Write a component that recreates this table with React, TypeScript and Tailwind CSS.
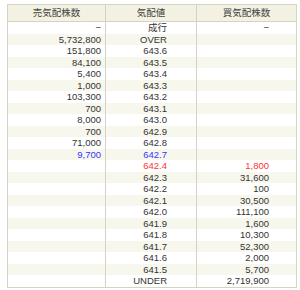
import React from 'react';

type Row = { sell: string; price: string; buy: string; tone?: 'blue' | 'red' };

const rows: Row[] = [
  { sell: '−', price: '成行', buy: '−' },
  { sell: '5,732,800', price: 'OVER', buy: '' },
  { sell: '151,800', price: '643.6', buy: '' },
  { sell: '84,100', price: '643.5', buy: '' },
  { sell: '5,400', price: '643.4', buy: '' },
  { sell: '1,000', price: '643.3', buy: '' },
  { sell: '103,300', price: '643.2', buy: '' },
  { sell: '700', price: '643.1', buy: '' },
  { sell: '8,000', price: '643.0', buy: '' },
  { sell: '700', price: '642.9', buy: '' },
  { sell: '71,000', price: '642.8', buy: '' },
  { sell: '9,700', price: '642.7', buy: '', tone: 'blue' },
  { sell: '', price: '642.4', buy: '1,800', tone: 'red' },
  { sell: '', price: '642.3', buy: '31,600' },
  { sell: '', price: '642.2', buy: '100' },
  { sell: '', price: '642.1', buy: '30,500' },
  { sell: '', price: '642.0', buy: '111,100' },
  { sell: '', price: '641.9', buy: '1,600' },
  { sell: '', price: '641.8', buy: '10,300' },
  { sell: '', price: '641.7', buy: '52,300' },
  { sell: '', price: '641.6', buy: '2,000' },
  { sell: '', price: '641.5', buy: '5,700' },
  { sell: '', price: 'UNDER', buy: '2,719,900' },
];

export default function App() {
  return (
    <div className="w-[300px] h-[290px] bg-white pt-[4px] pl-[7px] font-['Liberation_Sans','Noto_Sans_CJK_JP',sans-serif] text-[#333]">
      <table className="w-[289px] border-collapse table-fixed border border-[#d6d3c2] text-[9.5px]">
        <colgroup>
          <col className="w-[98px]" />
          <col className="w-[91px]" />
          <col className="w-[100px]" />
        </colgroup>
        <thead>
          <tr className="h-[17px] bg-[#f3f1e1] text-[#444]">
            <th className="border border-[#d6d3c2] font-normal text-center p-0">売気配株数</th>
            <th className="border border-[#d6d3c2] font-normal text-center p-0">気配値</th>
            <th className="border border-[#d6d3c2] font-normal text-center p-0">買気配株数</th>
          </tr>
        </thead>
        <tbody>
          {rows.map((r, i) => {
            const color = r.tone === 'blue' ? 'text-[#3535ff]' : r.tone === 'red' ? 'text-[#ff3333]' : '';
            return (
              <tr key={i} className={`h-[11.5px] leading-[11.5px] ${i % 2 === 1 ? 'bg-[#f8f7ed]' : 'bg-white'}`}>
                <td className={`border-x border-[#d6d3c2] p-0 pr-[4px] text-right ${r.tone === 'blue' ? color : ''}`}>{r.sell}</td>
                <td className={`border-x border-[#d6d3c2] p-0 pr-[29px] text-right ${color}`}>{r.price}</td>
                <td className={`border-x border-[#d6d3c2] p-0 pr-[27px] text-right ${r.tone === 'red' ? color : ''}`}>{r.buy}</td>
              </tr>
            );
          })}
        </tbody>
      </table>
    </div>
  );
}
